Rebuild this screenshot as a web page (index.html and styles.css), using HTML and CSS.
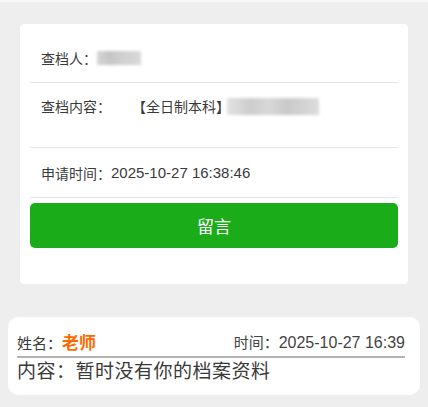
FILE: index.html
```html
<!DOCTYPE html>
<html lang="zh-CN">
<head>
  <meta charset="UTF-8">
  <title>查档详情</title>
  <link rel="stylesheet" href="styles.css">
</head>
<body>

  <div class="topline"></div>

  <div class="card">
    <div class="row first">
      <span class="label">查档人：</span>
      <span class="blur blur-name"></span>
    </div>
    <div class="row tall">
      <span class="label wide">查档内容：</span>
      <span class="value">【全日制本科】</span>
      <span class="blur blur-content"></span>
    </div>
    <div class="row">
      <span class="label">申请时间：</span>
      <span class="value num">2025-10-27 16:38:46</span>
    </div>
    <button class="btn">留言</button>
  </div>

  <div class="msg">
    <div class="msg-head">
      <span class="who">姓名：<b class="name">老师</b></span>
      <span class="time">时间：<span class="num big">2025-10-27 16:39</span></span>
    </div>
    <div class="msg-body">内容：暂时没有你的档案资料</div>
  </div>

</body>
</html>
```

FILE: styles.css
```css
body {
  margin: 0;
  background: #eeeeee;
  font-family: "Liberation Sans", "Noto Sans CJK SC", sans-serif;
  color: #3a3a3a;
}

.topline {
  height: 2px;
  background: #f8f8f8;
}

.card {
  background: #fff;
  margin: 22px 20px 0;
  padding: 10px 10px 36px;
  border-radius: 4px;
}

.row {
  display: flex;
  align-items: center;
  height: 49px;
  padding: 0 11px;
  border-bottom: 1px solid #e5e5e5;
  font-size: 14px;
}

.row.first {
  height: 48px;
}

.row.tall {
  height: 64px;
  align-items: flex-start;
  line-height: 48px;
}

.label.wide {
  width: 91px;
}

.num {
  font-size: 15px;
}

.num.big {
  font-size: 16px;
}

.blur {
  display: inline-block;
  background: linear-gradient(90deg, #d6d6d6 0%, #c4c4c4 30%, #cfcfcf 55%, #d9d9d9 100%);
  filter: blur(1.5px);
}

.blur-name {
  width: 44px;
  height: 14px;
}

.blur-content {
  width: 92px;
  height: 17px;
  margin-top: 15px;
  margin-left: -3px;
  background: linear-gradient(90deg, #e2e2e2 0%, #cdcdcd 25%, #d8d8d8 45%, #c9c9c9 65%, #dcdcdc 100%);
}

.btn {
  display: block;
  width: 100%;
  height: 45px;
  margin-top: 5px;
  border: none;
  border-radius: 5px;
  background: #1aad19;
  color: #fff;
  font-family: "Noto Sans CJK SC", sans-serif;
  font-size: 17px;
}

.msg {
  background: #fff;
  margin: 33px 8px 0;
  padding: 12px 15px 9px 9px;
  border-radius: 10px;
}

.msg-head {
  display: flex;
  justify-content: space-between;
  align-items: center;
  height: 24px;
  padding-bottom: 3px;
  border-bottom: 2px solid #b4b4b4;
  font-size: 15px;
}

.name {
  color: #ff6a00;
  font-size: 17px;
}

.time {
  color: #444;
}

.msg-body {
  line-height: 28px;
  font-size: 19px;
  letter-spacing: 0.5px;
}
```
